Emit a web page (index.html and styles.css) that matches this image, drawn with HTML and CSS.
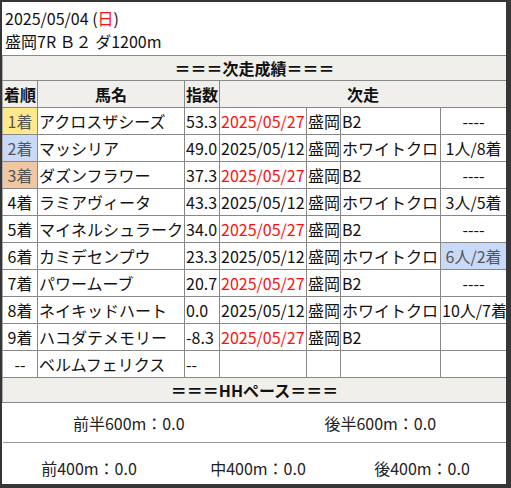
FILE: index.html
```html
<!DOCTYPE html>
<html lang="ja">
<head>
<meta charset="utf-8">
<link rel="stylesheet" href="styles.css">
</head>
<body>
<div class="frame">
  <div class="title">
    <div>2025/05/04 (<span class="red">日</span>)</div>
    <div>盛岡7R Ｂ２ ダ1200m</div>
  </div>
  <table class="res">
    <colgroup>
      <col class="c-rank"><col class="c-name"><col class="c-idx"><col class="c-date"><col class="c-place"><col class="c-race"><col class="c-result">
    </colgroup>
    <tr class="sec"><th colspan="7">＝＝＝次走成績＝＝＝</th></tr>
    <tr class="head"><th>着順</th><th>馬名</th><th>指数</th><th colspan="4">次走</th></tr>
    <tr><td class="rank gold">1着</td><td>アクロスザシーズ</td><td>53.3</td><td class="red">2025/05/27</td><td>盛岡</td><td>B2</td><td class="ctr">----</td></tr>
    <tr><td class="rank silver">2着</td><td>マッシリア</td><td>49.0</td><td>2025/05/12</td><td>盛岡</td><td>ホワイトクロ</td><td class="ctr">1人/8着</td></tr>
    <tr><td class="rank bronze">3着</td><td>ダズンフラワー</td><td>37.3</td><td class="red">2025/05/27</td><td>盛岡</td><td>B2</td><td class="ctr">----</td></tr>
    <tr><td class="rank">4着</td><td>ラミアヴィータ</td><td>43.3</td><td>2025/05/12</td><td>盛岡</td><td>ホワイトクロ</td><td class="ctr">3人/5着</td></tr>
    <tr><td class="rank">5着</td><td>マイネルシュラーク</td><td>34.0</td><td class="red">2025/05/27</td><td>盛岡</td><td>B2</td><td class="ctr">----</td></tr>
    <tr><td class="rank">6着</td><td>カミデセンプウ</td><td>23.3</td><td>2025/05/12</td><td>盛岡</td><td>ホワイトクロ</td><td class="ctr silver">6人/2着</td></tr>
    <tr><td class="rank">7着</td><td>パワームーブ</td><td>20.7</td><td class="red">2025/05/27</td><td>盛岡</td><td>B2</td><td class="ctr">----</td></tr>
    <tr><td class="rank">8着</td><td>ネイキッドハート</td><td>0.0</td><td>2025/05/12</td><td>盛岡</td><td>ホワイトクロ</td><td class="ctr">10人/7着</td></tr>
    <tr><td class="rank">9着</td><td>ハコダテメモリー</td><td>-8.3</td><td class="red">2025/05/27</td><td>盛岡</td><td>B2</td><td class="ctr"></td></tr>
    <tr><td class="rank">--</td><td>ベルムフェリクス</td><td>--</td><td></td><td></td><td></td><td></td></tr>
    <tr class="sec"><th colspan="7">＝＝＝HHペース＝＝＝</th></tr>
  </table>
  <div class="pace two">
    <div>前半600m：0.0</div>
    <div>後半600m：0.0</div>
  </div>
  <div class="pace three">
    <div class="p1">前400m：0.0</div>
    <div class="p2">中400m：0.0</div>
    <div class="p3">後400m：0.0</div>
  </div>
</div>
</body>
</html>
```
FILE: styles.css
```css
html, body {
  margin: 0;
  padding: 0;
  background: #363636;
}
body {
  padding: 2px 5px 0 2px;
  height: 488px;
  box-sizing: border-box;
  overflow: hidden;
  font-family: "Noto Sans CJK JP", "Noto Sans", sans-serif;
  font-size: 16px;
  color: #111;
}
.frame {
  background: #fff;
  height: 482px;
  overflow: hidden;
}
.title {
  padding: 5px 3px 2px;
  line-height: 23px;
  border-bottom: 1px solid #888;
}
.red { color: #ff0f0f; }
.res {
  width: 504px;
  border-collapse: collapse;
  table-layout: fixed;
}
.c-rank { width: 35px; }
.c-name { width: 147px; }
.c-idx { width: 35px; }
.c-date { width: 87px; }
.c-place { width: 34px; }
.c-race { width: 100px; }
.c-result { width: 66px; }
.res td, .res th {
  border: 1px solid #888;
  padding: 0 1px;
  height: 26px;
  line-height: 24px;
  white-space: nowrap;
  overflow: hidden;
  text-align: left;
}
.res tr:first-child th { border-top: none; }
.res td:first-child, .res th:first-child { border-left-color: #aaa; }
.sec th {
  background: #f1efeb;
  text-align: center;
  font-weight: bold;
  height: 24px;
}
.head th {
  background: #f1efeb;
  text-align: center;
  font-weight: bold;
}
.rank, .ctr { text-align: center !important; }
.gold { background: #ffe98a; color: #555; }
.silver { background: #c9daf8; color: #555; }
.bronze { background: #f0c7a0; color: #555; }
.pace {
  display: grid;
  align-items: center;
  justify-items: center;
  color: #222;
}
.two {
  grid-template-columns: 1fr 1fr;
  height: 39px;
  border-bottom: 1px solid #999;
  margin-left: 1px;
}
.three {
  grid-template-columns: 1fr 1fr 1fr;
  height: 40px;
  padding-top: 13px;
  align-items: start;
}
.p1 { margin-left: 6px; }
.p2 { margin-left: 8px; }
```
